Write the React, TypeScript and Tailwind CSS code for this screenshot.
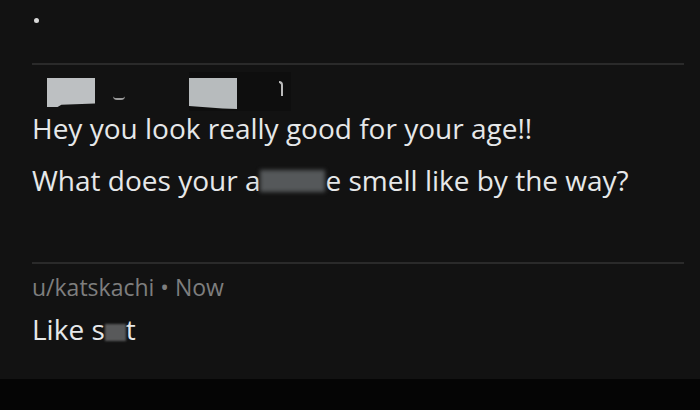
export default function App() {
  return (
    <div
      className="w-[700px] h-[410px] flex flex-col bg-[#121212] text-[#e6e8e9]"
      style={{ fontFamily: '"Open Sans", "Noto Sans", sans-serif' }}
    >
      <div className="flex-1 flex flex-col pl-[32px] pr-[16px]">
        {/* leftover of previous comment */}
        <div className="h-[63px] pt-[18px] pl-[2px]">
          <div className="w-[5px] h-[5px] rounded-full bg-[#d8d8d8]" />
        </div>
        <div className="h-[2px] bg-[#2a2a2a]" />

        {/* redacted comment */}
        <div className="h-[197px] flex flex-col">
          <div className="h-[45px] flex items-start pt-[13px] pl-[15px]">
            <div
              className="w-[48px] h-[29px] bg-[#bdc0c2]"
              style={{ clipPath: "polygon(0 0,100% 0,100% 88%,30% 92%,22% 100%,0 100%)" }}
            />
            <div className="ml-[18px] mt-[18px] w-[12px] h-[4px] border-b-2 border-[#9a9a9a] rounded-b-full" />
            <div className="ml-[64px] -mt-[6px] pt-[6px] pb-[2px] flex items-start bg-[#0e0e0e] pr-[54px]">
              <div
                className="w-[48px] h-[31px] bg-[#b7bbbd]"
                style={{ clipPath: "polygon(0 0,100% 0,100% 100%,70% 98%,0 90%)" }}
              />
            </div>
            <div className="-ml-[12px] mt-[3px] w-[4px] h-[15px] border-t-2 border-r-2 border-[#bbbbbb] rounded-tr-[4px]" />
          </div>
          <p className="text-[28px] leading-[36px] whitespace-nowrap">
            Hey you look really good for your age!!
          </p>
          <p className="mt-[16px] text-[28px] leading-[36px] whitespace-nowrap flex items-center">
            <span>What does your a</span>
            <span className="inline-block w-[65px] h-[22px] mt-[2px] bg-[#55585a] blur-[2px]" />
            <span>e smell like by the way?</span>
          </p>
        </div>
        <div className="h-[2px] bg-[#2a2a2a]" />

        {/* reply */}
        <div className="flex flex-col pt-[9px]">
          <p className="text-[23px] leading-[28px] text-[#7e7e7e] whitespace-nowrap">
            u/katskachi • Now
          </p>
          <p className="mt-[10px] text-[28px] leading-[36px] whitespace-nowrap flex items-center">
            <span>Like s</span>
            <span className="inline-block w-[21px] h-[17px] mt-[6px] bg-[#58595a] blur-[1px]" />
            <span>t</span>
          </p>
        </div>
      </div>
      <div className="h-[31px] bg-[#050505]" />
    </div>
  );
}
